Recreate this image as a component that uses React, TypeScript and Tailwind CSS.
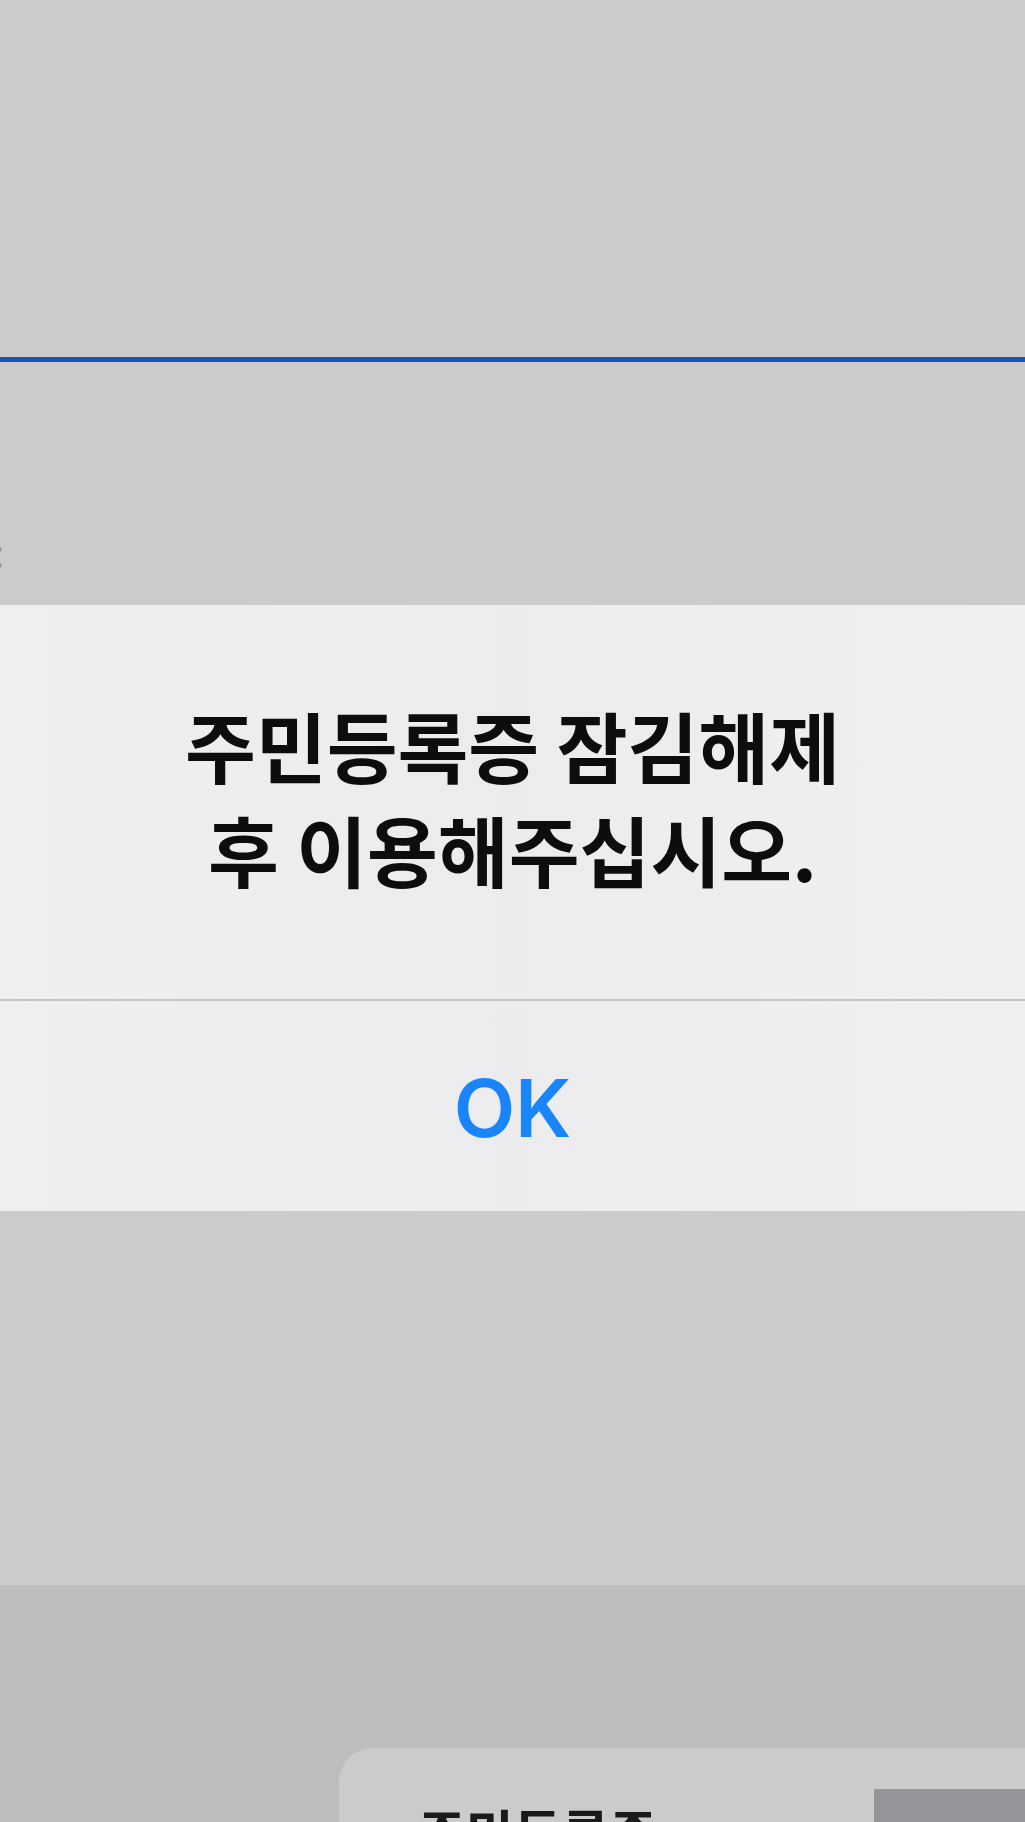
import React from "react";

const sans = "font-['Inter','Noto_Sans_CJK_KR',sans-serif]";

export default function App() {
  return (
    <div className={`w-[1025px] h-[1822px] overflow-hidden bg-[#cbcbcb] flex flex-col ${sans}`}>
      {/* top area */}
      <div className="h-[357px] shrink-0" />
      <div className="h-[5px] shrink-0 bg-[#1b54bb]" />
      <div className="h-[243px] shrink-0 relative overflow-hidden">
        <div className="pt-[168px] -ml-[7px] text-[40px] leading-[40px] text-[#8a8a8a] font-['Noto_Sans_CJK_KR',sans-serif]">
          :
        </div>
      </div>

      {/* alert */}
      <div className="h-[606px] shrink-0 bg-gradient-to-r from-[#efeff0] via-[#ececee] to-[#f0f0f1] flex flex-col">
        <div className="h-[394px] shrink-0 flex flex-col items-center pt-[88px]">
          <p className="text-[77px] leading-[104px] font-semibold text-[#0d0d0d] text-center font-['Noto_Sans_CJK_KR',sans-serif]">
            주민등록증 잠김해제
            <br />
            후 이용해주십시오.
          </p>
        </div>
        <div className="h-[2px] shrink-0 bg-[#c3c3c5]" />
        <div className="flex-1 flex items-center justify-center">
          <span className="text-[80px] leading-none font-semibold text-[#1a84fb] font-['Inter',sans-serif] pt-[4px]">
            OK
          </span>
        </div>
      </div>

      <div className="h-[374px] shrink-0" />

      {/* bottom band */}
      <div className="h-[237px] shrink-0 bg-[#bcbdbf] pt-[163px] pl-[339px]">
        <div className="h-[74px] bg-[#cbcbcb] rounded-tl-[34px] flex overflow-hidden">
          <div className="w-[535px] shrink-0 pl-[79px] pt-[58px]">
            <div className="text-[52px] leading-[52px] whitespace-nowrap font-bold text-[#1a1a1a] font-['Noto_Sans_CJK_KR',serif]">
              주민등록증
            </div>
          </div>
          <div className="flex-1 mt-[41px] bg-[#939598]" />
        </div>
      </div>
    </div>
  );
}
